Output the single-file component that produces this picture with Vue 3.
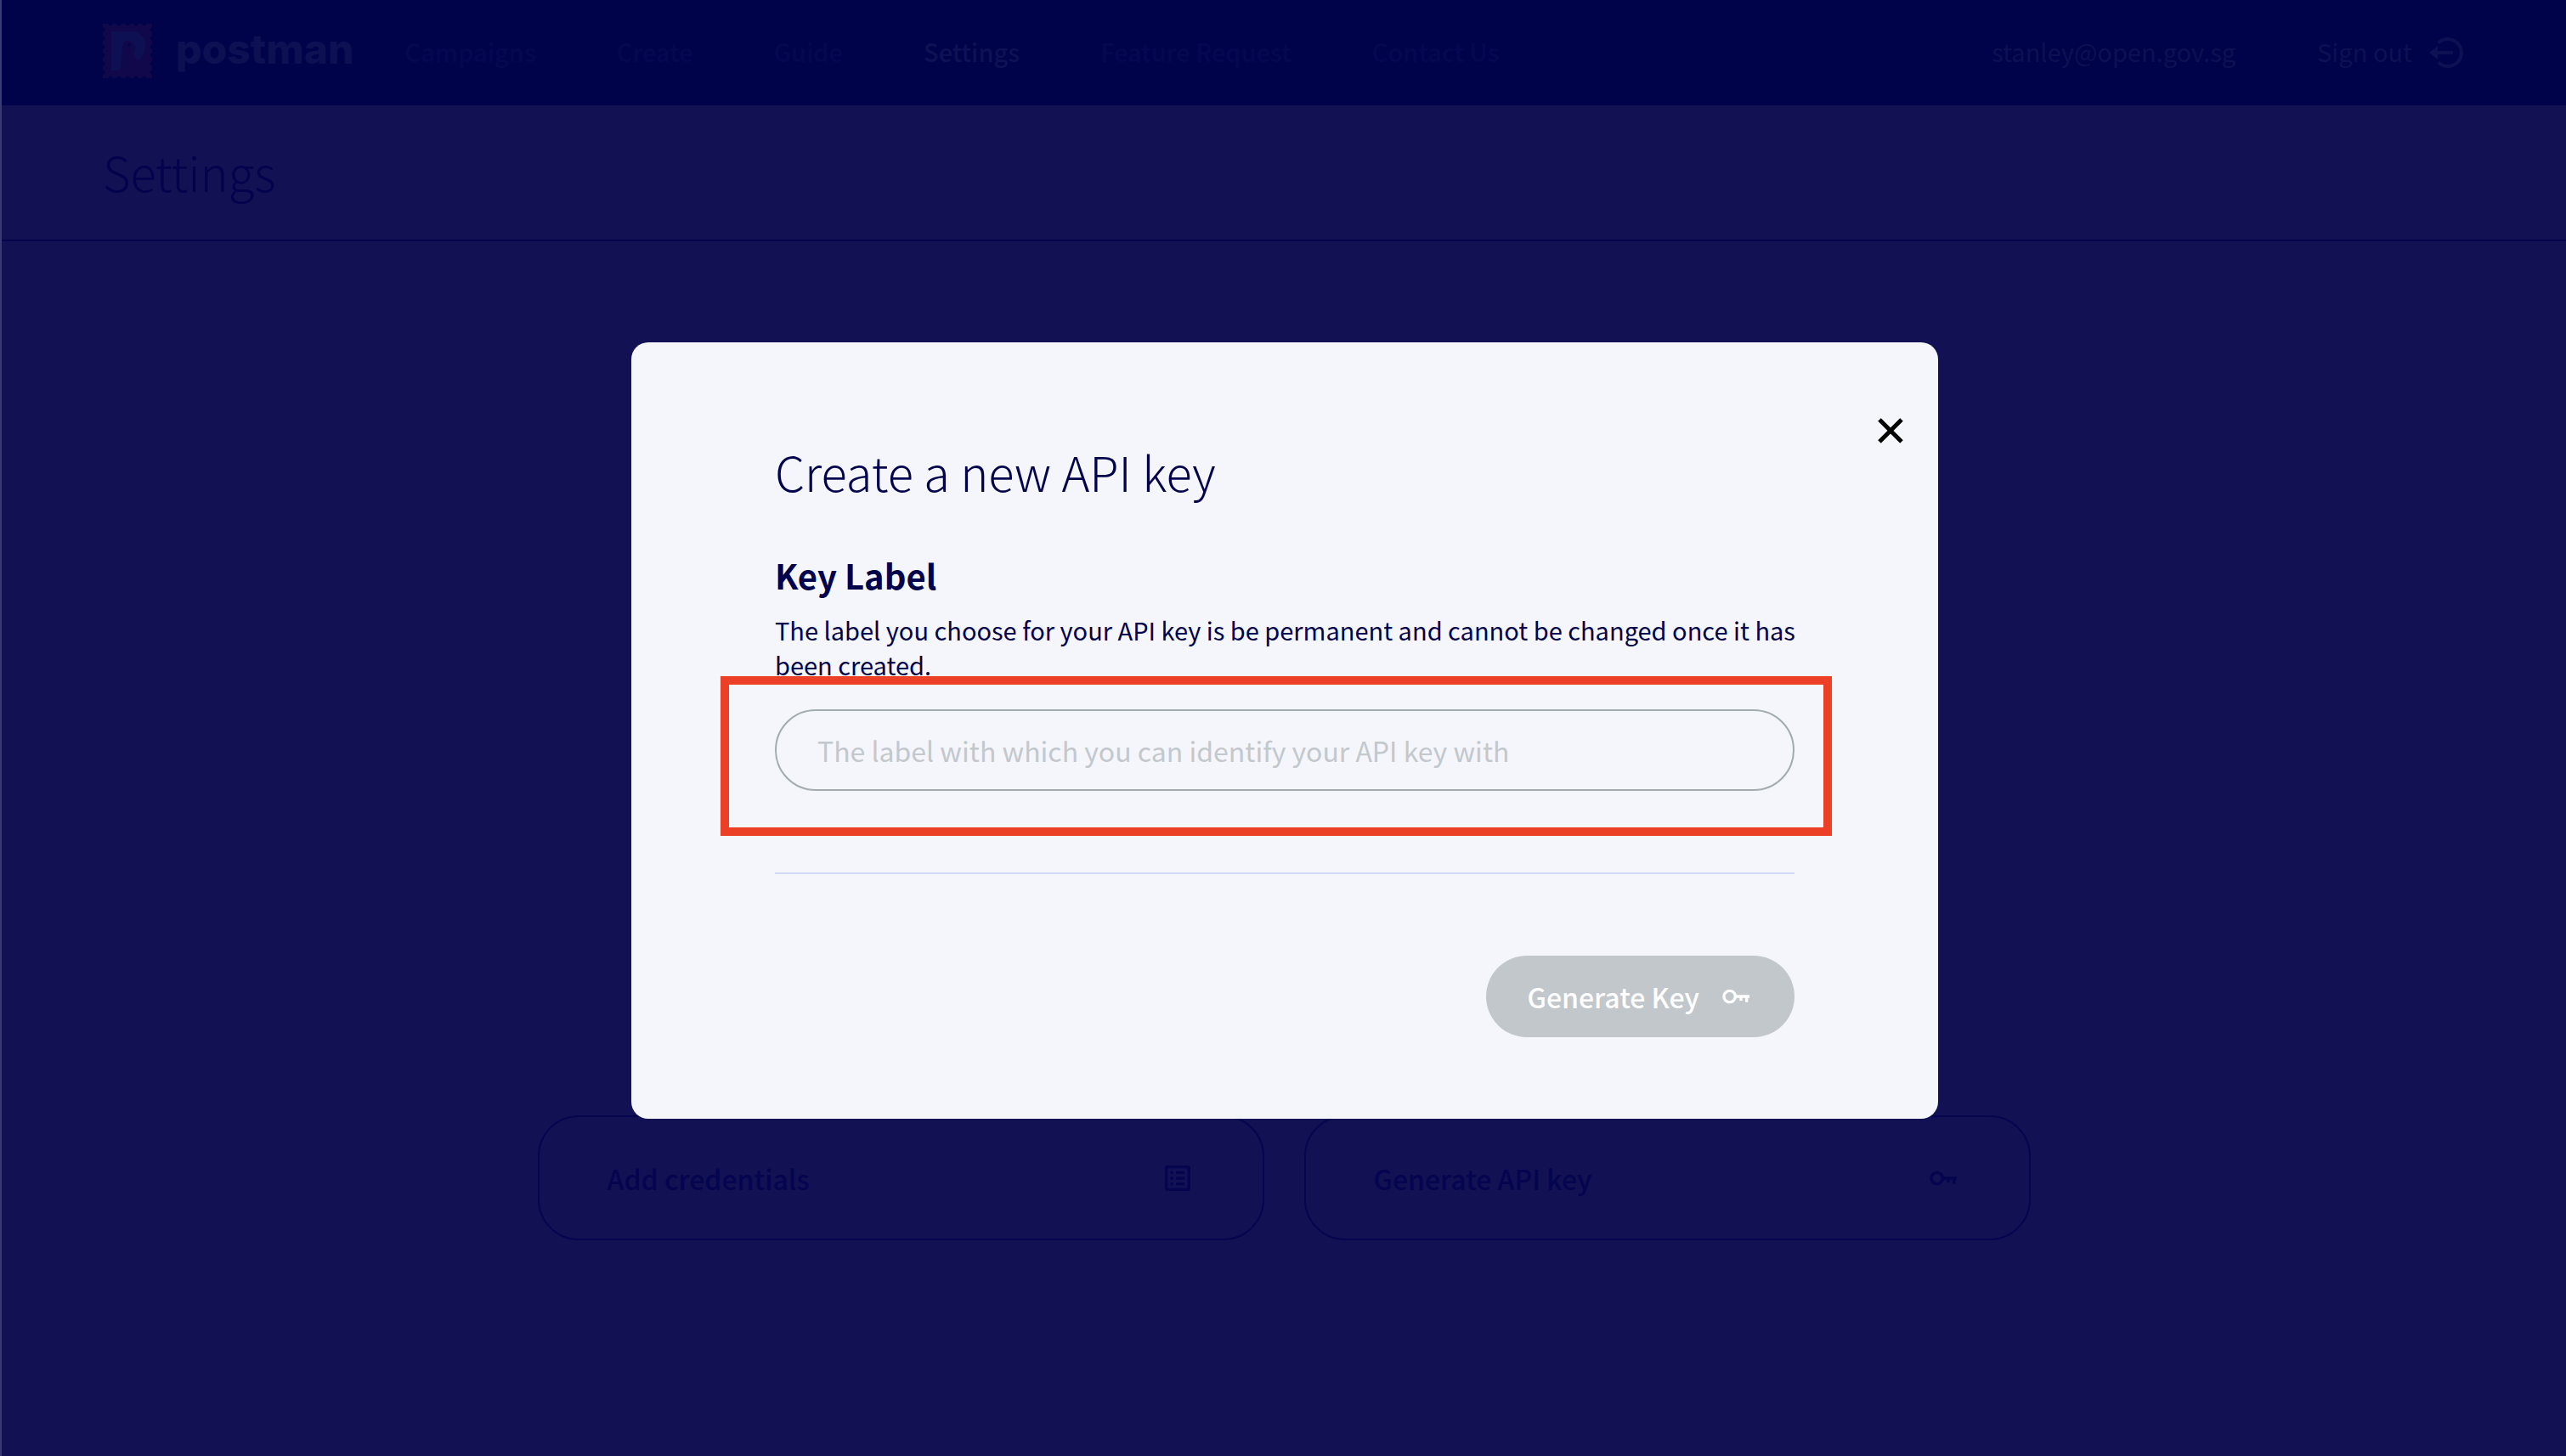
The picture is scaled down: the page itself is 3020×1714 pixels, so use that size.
<script setup>
import { ref } from 'vue'

const links = ['Campaigns', 'Create', 'Guide', 'Settings', 'Feature Request', 'Contact Us']
const active = 'Settings'
const label = ref('')
const keyPath =
  'M7 17a5.007 5.007 0 0 0 4.898-4H14v2h2v-2h2v3h2v-3h1v-2h-9.102A5.007 5.007 0 0 0 7 7c-2.757 0-5 2.243-5 5s2.243 5 5 5zm0-8c1.654 0 3 1.346 3 3s-1.346 3-3 3-3-1.346-3-3 1.346-3 3-3z'
</script>

<template>
  <div class="page">
    <header class="navbar">
      <a class="brand" href="#" aria-label="postman">
        <svg class="stamp" viewBox="0 0 58 64" aria-hidden="true">
          <rect width="58" height="64" fill="#11084c" />
          <path
            d="M9 0H50M9 64H50M0 7V58M58 7V58"
            fill="none"
            stroke="#01034a"
            stroke-width="5"
            stroke-linecap="round"
            stroke-dasharray="0 10"
          />
          <path
            d="M10 9h24c9 0 16 7 16 16 0 8-3 14-9 18-2-1-4-5-5-9l3-7-4-4c-1-2-3-3-6-3-4 0-6 4-6 9l-2 22c0 3-2 4-4 4h-7z"
            fill="#0d1052"
          />
          <circle cx="31" cy="25" r="2" fill="#05054c" />
        </svg>
        <span class="wordmark">postman</span>
      </a>
      <nav class="links">
        <a v-for="l in links" :key="l" href="#" :class="{ active: l === active }">{{ l }}</a>
      </nav>
      <div class="account">
        <span class="account-text">stanley@open.gov.sg</span>
        <a class="signout" href="#">
          <span class="account-text">Sign out</span>
          <svg class="icon-lg" viewBox="0 0 24 24" aria-hidden="true">
            <path d="m2 12 5 4v-3h9v-2H7V8z" />
            <path d="M13 3a8.94 8.94 0 0 0-6.363 2.637L8.051 7.05A6.95 6.95 0 0 1 13 5a7 7 0 1 1-4.949 11.95l-1.414 1.413A9 9 0 1 0 13 3z" />
          </svg>
        </a>
      </div>
    </header>

    <section class="title-bar">
      <h1>Settings</h1>
    </section>

    <main class="actions">
      <button class="action" type="button">
        Add credentials
        <svg class="icon" viewBox="0 0 24 24" aria-hidden="true">
          <path d="M19 3H5a2 2 0 0 0-2 2v14a2 2 0 0 0 2 2h14a2 2 0 0 0 2-2V5a2 2 0 0 0-2-2zM5 19V5h14v14z" />
          <path d="M7 7h2v2H7zm4 0h6v2h-6zm-4 4h2v2H7zm4 0h6v2h-6zm-4 4h2v2H7zm4 0h6v2h-6z" />
        </svg>
      </button>
      <button class="action" type="button">
        Generate API key
        <svg class="icon" viewBox="0 0 24 24" aria-hidden="true"><path :d="keyPath" /></svg>
      </button>
    </main>

    <div class="overlay">
      <form class="modal" role="dialog" aria-modal="true" aria-labelledby="modal-title" @submit.prevent>
        <button class="close" type="button" aria-label="Close">
          <svg viewBox="0 0 30 30" aria-hidden="true">
            <path d="M2 2l26 26M28 2L2 28" fill="none" stroke="#000" stroke-width="5" />
          </svg>
        </button>
        <h2 id="modal-title">Create a new API key</h2>
        <label class="field-label" for="key-label">Key Label</label>
        <p class="hint" id="key-hint">
          The label you choose for your API key is be permanent and cannot be changed once it has been created.
        </p>
        <div class="field">
          <input
            id="key-label"
            v-model="label"
            type="text"
            aria-describedby="key-hint"
            placeholder="The label with which you can identify your API key with"
          />
          <div class="highlight"></div>
        </div>
        <hr />
        <button class="submit" type="submit" disabled>
          Generate Key
          <svg class="icon" viewBox="0 0 24 24" aria-hidden="true"><path :d="keyPath" /></svg>
        </button>
      </form>
    </div>
  </div>
</template>

<style>
body {
  margin: 0;
  background: #111154;
}
</style>

<style scoped>
.page {
  box-sizing: border-box;
  min-height: 100vh;
  border-left: 2px solid #393a71;
  background: #111154;
  color: #02024d;
  font-family: 'Noto Sans CJK SC', 'Noto Sans', sans-serif;
}

a {
  color: inherit;
  text-decoration: none;
}

button,
input {
  box-sizing: border-box;
  margin: 0;
  font-family: inherit;
}

svg {
  display: block;
  flex: none;
  fill: currentColor;
}

.icon {
  width: 40px;
  height: 40px;
}

.icon-lg {
  width: 48px;
  height: 48px;
}

.navbar {
  display: flex;
  align-items: center;
  height: 124px;
  padding: 0 117px 0 119px;
  background: #01034a;
  font-size: 29px;
  line-height: 40px;
}

.brand {
  display: flex;
  align-items: center;
  gap: 28px;
  margin-right: 60px;
  padding-bottom: 4px;
  color: #0d1052;
}

.stamp {
  width: 58px;
  height: 64px;
}

.wordmark {
  padding-bottom: 4px;
  font-family: Inter, sans-serif;
  font-size: 48px;
  font-weight: 800;
}

.links {
  display: flex;
  gap: 95px;
  padding-bottom: 4px;
  color: #050850;
  font-weight: 500;
}

.links .active {
  color: #0e1153;
}

.account {
  display: flex;
  align-items: center;
  gap: 96px;
  margin-left: auto;
  color: #0d1053;
}

.account-text {
  padding-bottom: 4px;
}

.signout {
  display: flex;
  align-items: center;
  gap: 16px;
}

.title-bar {
  padding: 42px 119px 44px;
  border-bottom: 2px solid #05054e;
}

h1,
h2 {
  margin: 0;
  font-size: 56px;
  font-weight: 300;
  line-height: 72px;
}

.actions {
  display: flex;
  gap: 47px;
  max-width: 1757px;
  margin: 0 auto;
  padding-top: 1029px;
}

.action {
  display: flex;
  flex: 1;
  align-items: center;
  justify-content: space-between;
  height: 147px;
  padding: 0 80px;
  border: 2px solid #050550;
  border-radius: 48px;
  background: none;
  color: #04044f;
  font-size: 32px;
  font-weight: 500;
}

.overlay {
  position: fixed;
  inset: 6px 0 0 4px;
  display: flex;
  align-items: center;
  justify-content: center;
}

.modal {
  position: relative;
  display: flex;
  flex-direction: column;
  box-sizing: border-box;
  width: 1538px;
  max-width: 100%;
  padding: 116px 169px 96px;
  border-radius: 20px;
  background: #f5f6fc;
  color: #02024d;
}

.close {
  position: absolute;
  top: 89px;
  right: 41px;
  width: 30px;
  height: 30px;
  padding: 0;
  border: 0;
  background: none;
}

.field-label {
  margin-top: 58px;
  font-size: 40px;
  font-weight: 700;
  line-height: 56px;
}

.hint {
  margin: 16px -16px 0 0;
  font-size: 29px;
  line-height: 41px;
}

.field {
  position: relative;
  margin-top: 32px;
}

.field input {
  display: block;
  width: 100%;
  height: 96px;
  padding: 0 48px;
  border: 2px solid #a1abb0;
  border-radius: 48px;
  outline: 0;
  background: none;
  color: inherit;
  font-size: 32px;
}

.field input::placeholder {
  color: #c2c8cc;
  opacity: 1;
}

.highlight {
  position: absolute;
  inset: -39px -44px -53px -64px;
  border: 10px solid #eb4025;
  pointer-events: none;
}

hr {
  width: 100%;
  height: 2px;
  margin: 96px 0;
  border: 0;
  background: #d2daf8;
}

.submit {
  display: flex;
  align-items: center;
  align-self: flex-end;
  gap: 24px;
  height: 96px;
  padding: 0 48px;
  border: 0;
  border-radius: 48px;
  background: #c2c7cb;
  color: #fff;
  font-size: 32px;
  font-weight: 500;
}
</style>
